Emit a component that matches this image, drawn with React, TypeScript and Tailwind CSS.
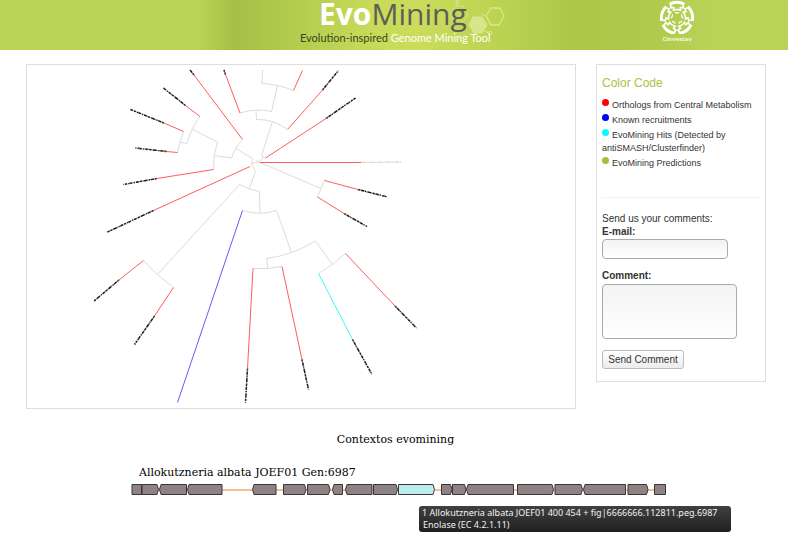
type Point = [number, number];

type Leaf = {
  from: Point;
  mid: Point;
  tip?: Point;
  color: string;
  faint?: boolean;
};

const RED = "#ff4a4a";
const BLUE = "#4a4aff";
const CYAN = "#2cf5f5";

const leaves: Leaf[] = [
  { from: [242.5, 139.5], mid: [194, 75], tip: [190, 70], color: RED },
  { from: [240, 113], mid: [225.5, 74.5], tip: [224, 70], color: RED },
  { from: [200, 116.5], mid: [185.5, 105.5], tip: [163.5, 88], color: RED },
  { from: [183.5, 131.5], mid: [164, 123], tip: [130.5, 109.5], color: RED },
  { from: [177.5, 152.5], mid: [166.5, 151.5], tip: [135.5, 148], color: RED },
  { from: [213.5, 169.5], mid: [157, 178.5], tip: [123.5, 184.5], color: RED },
  { from: [250, 166.5], mid: [153.5, 210.5], tip: [107.5, 232], color: RED },
  { from: [293.5, 90.5], mid: [302.5, 70.5], color: RED },
  { from: [287.5, 129.5], mid: [322.5, 90], tip: [338.5, 70.5], color: RED },
  { from: [265.5, 158], mid: [326, 118.5], tip: [355.5, 98], color: RED },
  { from: [260, 162.5], mid: [361, 162.5], tip: [401, 162], color: RED, faint: true },
  { from: [324.5, 180.5], mid: [358, 189.5], tip: [387.5, 197], color: RED },
  { from: [317.5, 197], mid: [344, 213.5], tip: [367, 226.5], color: RED },
  { from: [143.5, 260.5], mid: [119, 280], tip: [93.5, 301.5], color: RED },
  { from: [173.5, 287.5], mid: [154.5, 316], tip: [134.5, 344.5], color: RED },
  { from: [242.5, 210.5], mid: [177.5, 402.5], color: BLUE },
  { from: [253, 268.5], mid: [247.5, 368.5], tip: [245.5, 402.5], color: RED },
  { from: [282, 266.5], mid: [302, 359.5], tip: [308.5, 389.5], color: RED },
  { from: [318.5, 273.5], mid: [352.5, 339.5], tip: [372, 374.5], color: CYAN },
  { from: [345.5, 253.5], mid: [395, 306], tip: [416.5, 328], color: RED },
];

const branches = [
  "M200 116.5Q190 130 187 143.5L180.5 142.3",
  "M183.5 131.5Q180 141 177.5 152.5",
  "M192.5 129.5L217.5 142Q213 155 213.5 169.5",
  "M214 155.5L231.5 158Q234 148 242.5 139.5",
  "M235.5 148L252.5 158.5L251.5 164L255.5 171.5L249 189.5",
  "M157.5 274.5L239.5 184.5Q249 190 259.5 191.5L260 213.5",
  "M242.5 210.5Q260 216 276.5 210.5L291.5 252.5",
  "M266.5 258.5Q293 255 315.5 241L332.5 264.5",
  "M267 258.5L267.5 268.5",
  "M253 268.5Q268 269.5 282 266.5",
  "M318.5 273.5Q333 265 345.5 253.5",
  "M143.5 260.5Q157 276 173.5 287.5",
  "M262.5 70L262 83.5Q279 84.5 293.5 90.5",
  "M277.5 85.5L271.5 111.5Q256 108 240 113",
  "M256 110.5L256.5 119.5Q274 119 287.5 129.5",
  "M272.5 121.5L261.5 155.5L265.5 158",
  "M263 157L260 161.5L252 163.5M256 160.5L261 163",
  "M260 162.5L321 188.5M324.5 180.5L317.5 197",
];

type Gene = { x1: number; x2: number; dir: "left" | "right" | "none"; hit?: boolean };

const genes: Gene[] = [
  { x1: 132, x2: 141.5, dir: "none" },
  { x1: 142, x2: 158.5, dir: "right" },
  { x1: 159.5, x2: 186.5, dir: "left" },
  { x1: 187.5, x2: 222, dir: "left" },
  { x1: 252.5, x2: 276, dir: "left" },
  { x1: 283.5, x2: 306, dir: "right" },
  { x1: 307.5, x2: 330, dir: "right" },
  { x1: 332.5, x2: 342.5, dir: "left" },
  { x1: 345.5, x2: 372, dir: "left" },
  { x1: 373.5, x2: 397.5, dir: "right" },
  { x1: 398.5, x2: 434.5, dir: "right", hit: true },
  { x1: 441.5, x2: 452, dir: "right" },
  { x1: 452.5, x2: 466, dir: "right" },
  { x1: 466.5, x2: 513.5, dir: "left" },
  { x1: 517.5, x2: 553.5, dir: "right" },
  { x1: 555, x2: 582.5, dir: "right" },
  { x1: 583.5, x2: 625.5, dir: "left" },
  { x1: 628, x2: 648, dir: "right" },
  { x1: 654.5, x2: 665.5, dir: "none" },
];

function genePoints({ x1, x2, dir }: Gene) {
  if (dir === "left") return `${x1},6.5 ${x1 + 1.5},1.5 ${x2},1.5 ${x2},11.5 ${x1 + 1.5},11.5`;
  if (dir === "right") return `${x1},1.5 ${x2 - 1.5},1.5 ${x2},6.5 ${x2 - 1.5},11.5 ${x1},11.5`;
  return `${x1},1.5 ${x2},1.5 ${x2},11.5 ${x1},11.5`;
}

function HexDecoration() {
  return (
    <svg className="absolute top-0 left-[150px] h-[50px] w-[60px]" viewBox="0 0 60 50" fill="none" stroke="#d9e78d" aria-hidden="true">
      <path d="M38 16L43 8H52L56 16L51 25H43Z" strokeWidth="1.3" />
      <path d="M21 25L25 17H34L39 25L34 33H26Z" fill="#d7e68a" />
      <path d="M2 14L7 6H15L20 14L15 22H7Z" opacity=".6" />
      <circle cx="9" cy="2" r="1.5" />
      <circle cx="42" cy="33" r="1.7" />
      <path d="M33 14L38 16M9 6V3M36 31L41 33" />
    </svg>
  );
}

function CinvestavLogo() {
  return (
    <svg className="h-[34px] w-[36px]" viewBox="-18 -18 36 34" fill="none" stroke="#fff" aria-hidden="true">
      {[0, 72, 144, 216, 288].map((angle) => (
        <g key={angle} transform={`rotate(${angle})`}>
          <path d="M-7.5 -13.7Q0 -17.8 7.5 -13.7" strokeWidth="3" />
          <path d="M-6.3 -13V-10.4H-3.3V-7.2M6.3 -13V-10.4H3.3V-7.2" strokeWidth="1.7" />
          <path d="M-4.2 -7.4Q0 -9.6 4.2 -7.4" strokeWidth="1.6" />
          <path d="M-2 -5.6L0 -4.9L2 -5.6" strokeWidth="1.2" />
        </g>
      ))}
    </svg>
  );
}

function Header() {
  return (
    <header className="grid h-[50px] grid-cols-[1fr_192px_1fr] bg-[#b9d358] bg-[linear-gradient(90deg,#b9d457_0%,#b9d457_25%,#a4c047_30%,#b0ca4d_36%,#c8da59_47%,#cbdc5b_53%,#bed453_62%,#abc849_73%,#afca4c_83%,#b9d358_90%)]">
      <div />
      <div className="relative">
        <HexDecoration />
        <h1 className="relative pl-[21px] font-['Open_Sans',sans-serif] text-[30px] leading-[28px] whitespace-nowrap text-[#5c5f58]">
          <b className="text-white">Evo</b>Mining
        </h1>
        <p className="relative mt-[3px] pl-[2px] font-['Lato',sans-serif] text-[11px] leading-[14px] whitespace-nowrap text-white">
          <span className="text-[#39451f]">Evolution-inspired</span> Genome Mining Tool
        </p>
      </div>
      <div className="flex flex-col items-center pl-[76px]">
        <CinvestavLogo />
        <span className="font-['Open_Sans',sans-serif] text-[6px] leading-[10px] font-bold text-[#f3f8dc]">Cinvestav</span>
      </div>
    </header>
  );
}

function Tree() {
  return (
    <svg className="block h-[343px] w-[548px]" viewBox="27 65 548 343" fill="none" role="img" aria-label="Phylogenetic tree">
      {branches.map((d) => (
        <path key={d} d={d} stroke="#dcdcdc" />
      ))}
      {leaves.map(({ from, mid, tip, color, faint }) => (
        <g key={from.join()}>
          <path d={`M${from}L${mid}`} stroke={color} strokeWidth="0.9" />
          {tip && (
            <>
              <path d={`M${mid}L${tip}`} stroke={faint ? "#d8d8d8" : "#9aa0a6"} strokeWidth="1.3" strokeDasharray="5 .7 2 .6" />
              {!faint && <path d={`M${mid}L${tip}`} stroke="#15171a" strokeWidth="1.4" strokeDasharray="2 1.2 3 1 1 1.6 4 1.4" />}
              {!faint && <path d={`M${mid}L${tip}`} stroke="#b5853f" strokeWidth="1" strokeDasharray="1 8" />}
            </>
          )}
        </g>
      ))}
    </svg>
  );
}

const legend = [
  { dot: "bg-[#ff0000]", text: "Orthologs from Central Metabolism" },
  { dot: "bg-[#0000ff]", text: "Known recruitments" },
  { dot: "bg-[#00ffff]", text: "EvoMining Hits (Detected by antiSMASH/Clusterfinder)" },
  { dot: "bg-[#a5bd42]", text: "EvoMining Predictions" },
];

const fieldStyle =
  "block rounded-[4px] border border-[#aaa] bg-linear-to-b from-[#f3f3f3] to-white px-1 outline-none";

function Sidebar() {
  return (
    <aside className="w-[170px] shrink-0 border border-[#dedede] px-[5px] pt-[9px] pb-[12px] text-[10px] leading-[13px] text-[#333]">
      <h2 className="text-[12px] leading-[18px] text-[#a9c23f]">Color Code</h2>
      <ul className="mt-[5px] text-[9px]">
        {legend.map(({ dot, text }) => (
          <li key={text} className="pt-[2px]">
            <span className={`mr-[3px] mb-[2px] inline-block size-[7px] rounded-full ${dot}`} />
            {text}
          </li>
        ))}
      </ul>
      <hr className="mt-[27px] mb-[14px] border-[#f3f3f3]" />
      <form onSubmit={(e) => e.preventDefault()}>
        <p>Send us your comments:</p>
        <label htmlFor="email" className="block font-bold">E-mail:</label>
        <input id="email" type="email" className={`${fieldStyle} mt-px h-[20px] w-[126px]`} />
        <label htmlFor="comment" className="mt-[10px] block font-bold">Comment:</label>
        <textarea id="comment" className={`${fieldStyle} mt-[2px] h-[55px] w-[135px] resize-none`} />
        <button
          type="submit"
          className="mt-[11px] block h-[19px] w-[82px] rounded-[3px] border border-[#bbb] bg-linear-to-b from-white to-[#ececec] whitespace-nowrap"
        >
          Send Comment
        </button>
      </form>
    </aside>
  );
}

function Contexts() {
  return (
    <section className="mt-[24px] font-['DejaVu_Serif',serif] text-[11px] leading-[14px] text-black">
      <h2 className="pl-[3px] text-center">Contextos evomining</h2>
      <div className="relative mx-auto mt-[19px] w-[544px]">
        <h3 className="pl-[17px]">Allokutzneria albata JOEF01 Gen:6987</h3>
        <svg className="mt-[3px] block h-[14px] w-[544px]" viewBox="122 0 544 14" role="img" aria-label="Gene context">
          <path d="M132 7H665" stroke="#f7a868" strokeWidth="1.3" />
          {genes.map((gene) => (
            <polygon key={gene.x1} points={genePoints(gene)} fill={gene.hit ? "#b8eeee" : "#8f8284"} stroke="#3b3538" />
          ))}
        </svg>
        <div
          role="tooltip"
          className="absolute top-[40px] left-[297px] w-[312px] rounded-[3px] bg-linear-to-b from-[#414141] to-[#202020] py-px pl-[3px] font-['Noto_Sans',sans-serif] text-[9px] leading-[12px] whitespace-nowrap text-[#f2f2f2]"
        >
          <p>1 Allokutzneria albata JOEF01 400 454 + fig|6666666.112811.peg.6987</p>
          <p className="pl-px">Enolase (EC 4.2.1.11)</p>
        </div>
      </div>
    </section>
  );
}

export default function App() {
  return (
    <div className="min-h-screen bg-white font-['Liberation_Sans',Arial,sans-serif]">
      <Header />
      <main className="pt-[14px]">
        <div className="flex items-start gap-[20px] pr-[22px] pl-[26px]">
          <div className="flex min-w-0 flex-1 border border-[#dedede]">
            <Tree />
          </div>
          <Sidebar />
        </div>
        <Contexts />
      </main>
    </div>
  );
}
